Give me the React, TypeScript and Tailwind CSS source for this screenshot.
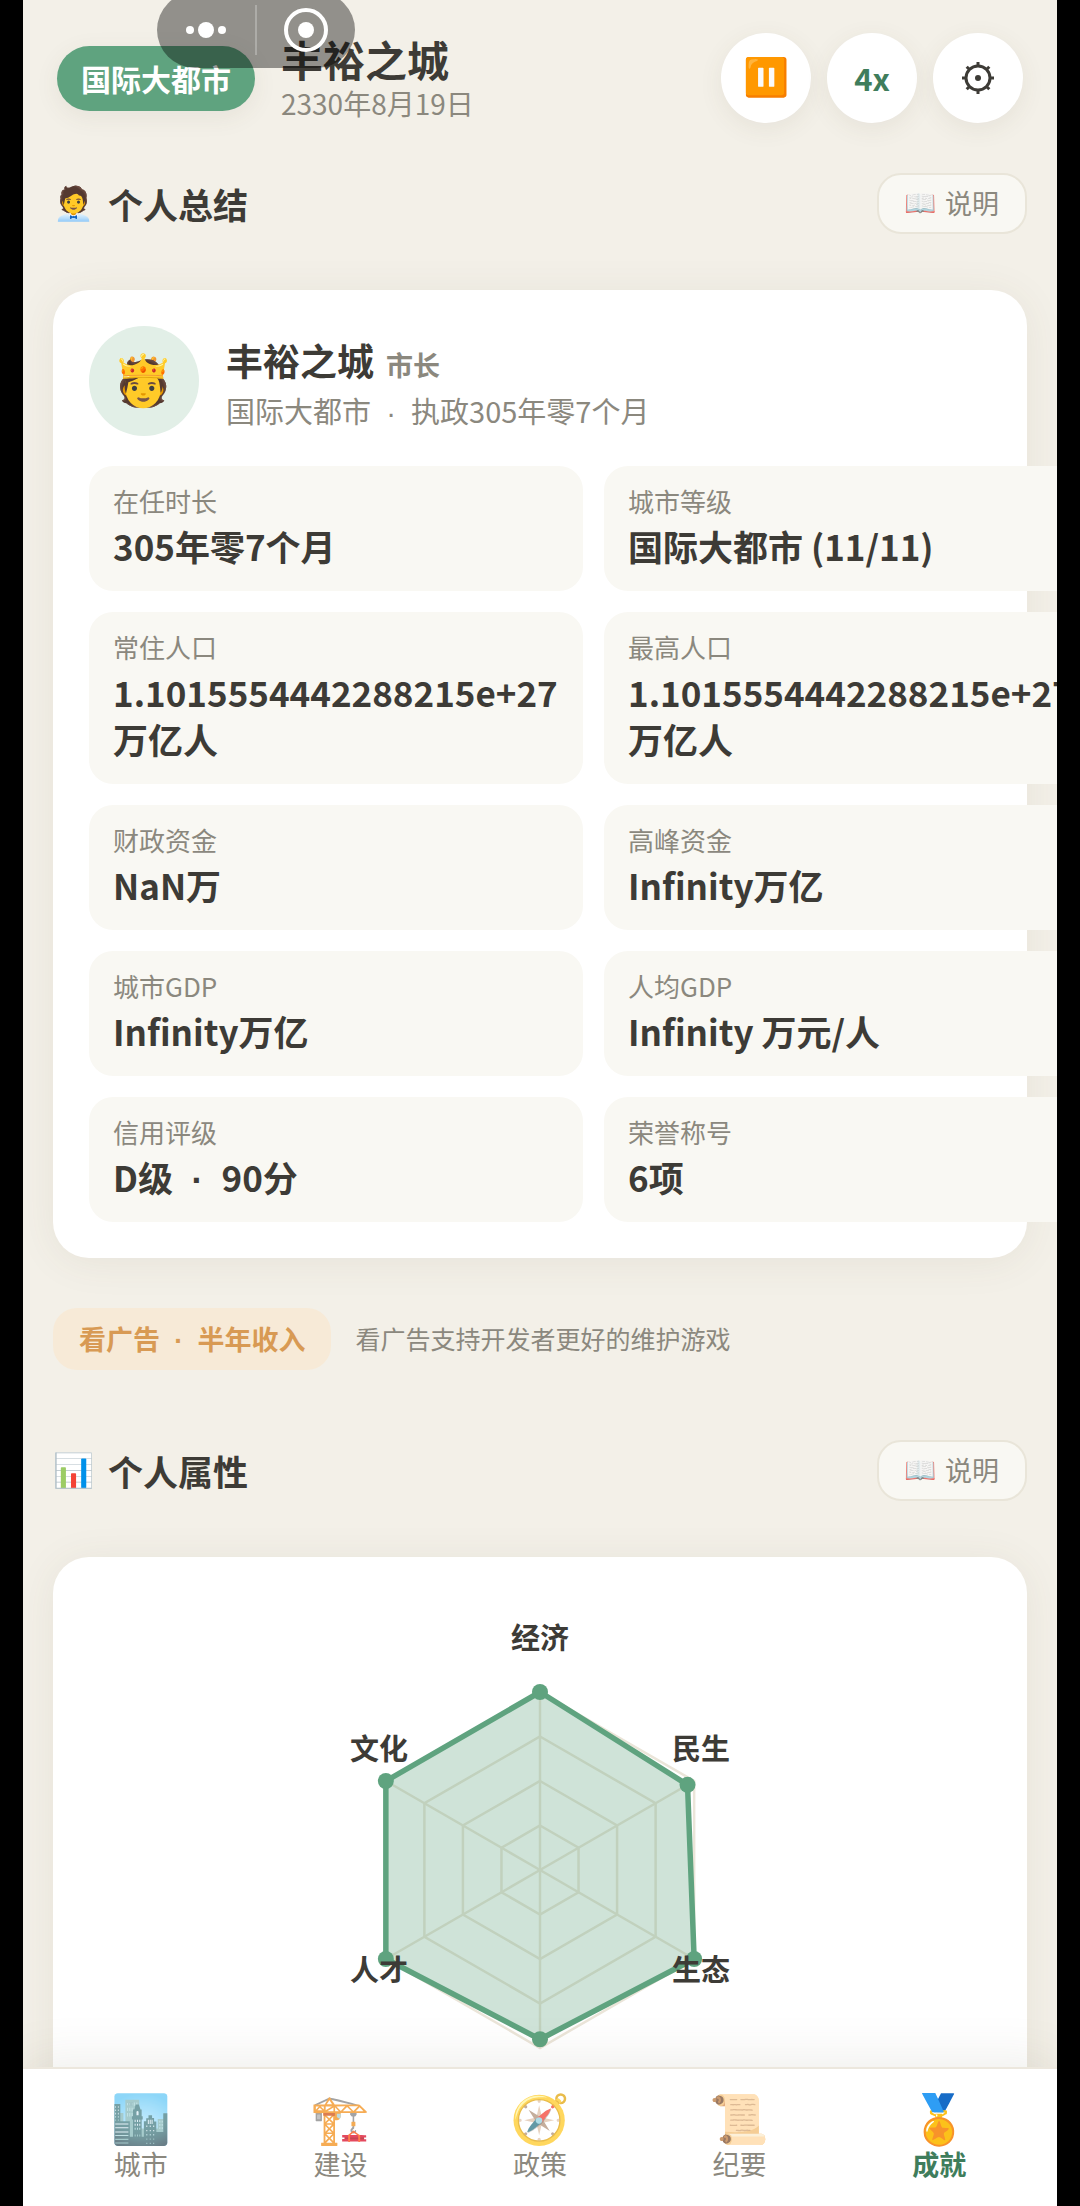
import { useState } from "react";

type Stat = { label: string; value: string };

const stats: Stat[] = [
  { label: "在任时长", value: "305年零7个月" },
  { label: "城市等级", value: "国际大都市 (11/11)" },
  { label: "常住人口", value: "1.1015554442288215e+27万亿人" },
  { label: "最高人口", value: "1.1015554442288215e+27万亿人" },
  { label: "财政资金", value: "NaN万" },
  { label: "高峰资金", value: "Infinity万亿" },
  { label: "城市GDP", value: "Infinity万亿" },
  { label: "人均GDP", value: "Infinity 万元/人" },
  { label: "信用评级", value: "D级 · 90分" },
  { label: "荣誉称号", value: "6项" },
];

const tabs = [
  { icon: "🏙️", label: "城市" },
  { icon: "🏗️", label: "建设" },
  { icon: "🧭", label: "政策" },
  { icon: "📜", label: "纪要" },
  { icon: "🏅", label: "成就" },
];

// clockwise from the top, 1 = full ring
const attributes = [1, 0.957, 1, 0.951, 1, 1];

const RADIUS = 178;

const ringPoint = (i: number, ratio: number) => {
  const angle = (Math.PI / 3) * i - Math.PI / 2;
  return [220 + RADIUS * ratio * Math.cos(angle), 277 + RADIUS * ratio * Math.sin(angle)];
};

const toPoints = (ratios: number[]) => ratios.map((r, i) => ringPoint(i, r).join(",")).join(" ");

const RadarChart = () => (
  <svg className="mx-auto block" width="440" height="500" viewBox="0 0 440 500">
    <g fill="none" stroke="#ebe5d9" strokeWidth="2.5">
      {[0.25, 0.5, 0.75, 1].map((ratio) => (
        <polygon key={ratio} points={toPoints(Array(6).fill(ratio))} />
      ))}
      {attributes.map((_, i) => {
        const [x, y] = ringPoint(i, 1);
        return <line key={i} x1="220" y1="277" x2={x} y2={y} />;
      })}
    </g>
    <polygon points={toPoints(attributes)} fill="#5fa37f" fillOpacity="0.3" stroke="#5fa37f" strokeWidth="5.5" />
    {attributes.map((ratio, i) => {
      const [x, y] = ringPoint(i, ratio);
      return <circle key={i} cx={x} cy={y} r="8" fill="#5fa37f" />;
    })}
    <g fill="#3d3b36" fontSize="29" fontWeight="700" textAnchor="middle">
      <text x="220" y="56">经济</text>
      <text x="381" y="167">民生</text>
      <text x="381" y="388">生态</text>
      <text x="59" y="388">人才</text>
      <text x="59" y="167">文化</text>
    </g>
  </svg>
);

const GearIcon = () => (
  <svg width="34" height="34" viewBox="0 0 34 34" fill="none" stroke="#3d3b36" strokeWidth="3">
    <circle cx="17" cy="17" r="12" />
    <circle cx="17" cy="17" r="3" fill="#3d3b36" stroke="none" />
    {[0, 45, 90, 135, 180, 225, 270, 315].map((deg) => (
      <path key={deg} d="M17 5V1" transform={`rotate(${deg} 17 17)`} />
    ))}
  </svg>
);

// splits "a · b" so the separator keeps the same spacing everywhere
const Dotted = ({ text }: { text: string }) => {
  const [first, second] = text.split(" · ");
  if (!second) return <>{text}</>;
  return (
    <>
      {first} <span className="px-[0.3em] font-['Liberation_Sans',sans-serif] leading-none">·</span> {second}
    </>
  );
};

const emoji = "font-['Noto_Color_Emoji',sans-serif]";

const SectionHeader = ({ icon, title }: { icon: string; title: string }) => (
  <div className="flex items-center justify-between">
    <h2 className="flex items-center gap-[14px] text-[35px] leading-[48px] font-bold">
      <span className={`${emoji} text-[33px] font-normal`}>{icon}</span>
      {title}
    </h2>
    <button type="button" className="flex h-[61px] items-center gap-2 rounded-3xl border-2 border-[#e9e5d9] bg-[#f9f8f3] px-[26px] text-[27px] text-[#8b887e]">
      <span className={`${emoji} text-[26px] opacity-70`}>📖</span>
      说明
    </button>
  </div>
);

const roundButton = "flex size-[90px] items-center justify-center rounded-full bg-white shadow-[0_6px_24px_rgba(90,80,50,0.08)]";
const card = "rounded-[36px] bg-white p-9 shadow-[0_4px_40px_rgba(90,80,50,0.08)]";

export default function App() {
  const [activeTab, setActiveTab] = useState("成就");
  const [paused, setPaused] = useState(false);

  return (
    <div className="h-screen bg-black px-[23px] font-['Noto_Sans_CJK_SC',sans-serif] text-[#3d3b36]">
      <div className="relative flex h-full flex-col overflow-hidden bg-[#f3f0e8]">
        <div className="absolute -top-2 left-[134px] z-20 flex h-[76px] w-[198px] items-center rounded-full bg-black/40">
          <button type="button" aria-label="更多" className="flex flex-1 items-center justify-center gap-1">
            <span className="size-2 rounded-full bg-white" />
            <span className="size-4 rounded-full bg-white" />
            <span className="size-2 rounded-full bg-white" />
          </button>
          <span className="h-[50px] w-[2px] bg-white/25" />
          <button type="button" aria-label="关闭" className="flex flex-1 items-center justify-center">
            <span className="flex size-11 items-center justify-center rounded-full border-4 border-white">
              <span className="size-4 rounded-full bg-white" />
            </span>
          </button>
        </div>

        <header className="flex items-center justify-between px-[34px] pt-[33px]">
          <div className="flex items-center gap-[26px]">
            <span className="flex h-[65px] items-center rounded-full bg-[#5fa37f] px-6 text-[30px] font-bold text-white shadow-[0_6px_24px_rgba(90,80,50,0.08)]">
              国际大都市
            </span>
            <div>
              <h1 className="text-[42px] leading-[48px] font-bold">丰裕之城</h1>
              <p className="mt-0.5 text-[28px] leading-[36px] text-[#8b887e]">2330年8月19日</p>
            </div>
          </div>
          <div className="flex gap-4">
            <button type="button" aria-label="暂停" className={roundButton} onClick={() => setPaused(!paused)}>
              <span className={`${emoji} text-[37px]`}>{paused ? "▶️" : "⏸️"}</span>
            </button>
            <button type="button" className={`${roundButton} text-[31px] font-bold text-[#3f7d5c]`}>4x</button>
            <button type="button" aria-label="设置" className={roundButton}>
              <GearIcon />
            </button>
          </div>
        </header>

        <main className="min-h-0 flex-1 overflow-auto px-[30px] pt-[50px] [scrollbar-width:none]">
          <SectionHeader icon="🧑‍💼" title="个人总结" />

          <section className={`${card} mt-14`}>
            <div className="flex items-center gap-[27px]">
              <span className={`${emoji} flex size-[110px] items-center justify-center rounded-full bg-[#e2efe7] text-[50px]`}>🫅</span>
              <div className="pt-0.5">
                <h3 className="flex items-baseline gap-3 text-[37px] leading-[50px] font-bold">
                  丰裕之城
                  <span className="text-[27px] text-[#8b887e]">市长</span>
                </h3>
                <p className="text-[29px] leading-[40px] text-[#8b887e]">
                  <Dotted text="国际大都市 · 执政305年零7个月" />
                </p>
              </div>
            </div>
            <dl className="mt-[30px] grid grid-cols-[repeat(2,minmax(494px,1fr))] gap-[21px]">
              {stats.map((stat) => (
                <div key={stat.label} className="rounded-3xl bg-[#f9f8f3] px-6 pt-4 pb-[22px]">
                  <dt className="text-[26px] leading-[38px] text-[#8b887e]">{stat.label}</dt>
                  <dd className="mt-0.5 text-[35px] leading-[47px] font-bold">
                    <Dotted text={stat.value} />
                  </dd>
                </div>
              ))}
            </dl>
          </section>

          <div className="mt-[50px] flex items-center gap-6">
            <button type="button" className="h-[62px] rounded-3xl bg-[#f7ead7] px-[26px] text-[27px] font-bold text-[#d89a54]">
              <Dotted text="看广告 · 半年收入" />
            </button>
            <span className="text-[25px] text-[#8b887e]">看广告支持开发者更好的维护游戏</span>
          </div>

          <div className="mt-[70px]">
            <SectionHeader icon="📊" title="个人属性" />
          </div>

          <section className={`${card} mt-14`}>
            <RadarChart />
          </section>
        </main>

        <nav className="relative z-10 flex h-[139px] border-t-2 border-[#ece7dd] bg-white px-[18px] pt-4 shadow-[0_-6px_50px_rgba(90,80,50,0.1)]">
          {tabs.map((tab) => (
            <button
              key={tab.label}
              type="button"
              onClick={() => setActiveTab(tab.label)}
              className={`flex flex-1 flex-col items-center text-[27px] leading-[34px] ${activeTab === tab.label ? "font-bold text-[#3f7d5c]" : "text-[#8b887e]"}`}
            >
              <span className={`${emoji} -mb-2 text-[48px] leading-[70px] font-normal ${activeTab === tab.label ? "" : "opacity-75"}`}>{tab.icon}</span>
              {tab.label}
            </button>
          ))}
        </nav>
      </div>
    </div>
  );
}
